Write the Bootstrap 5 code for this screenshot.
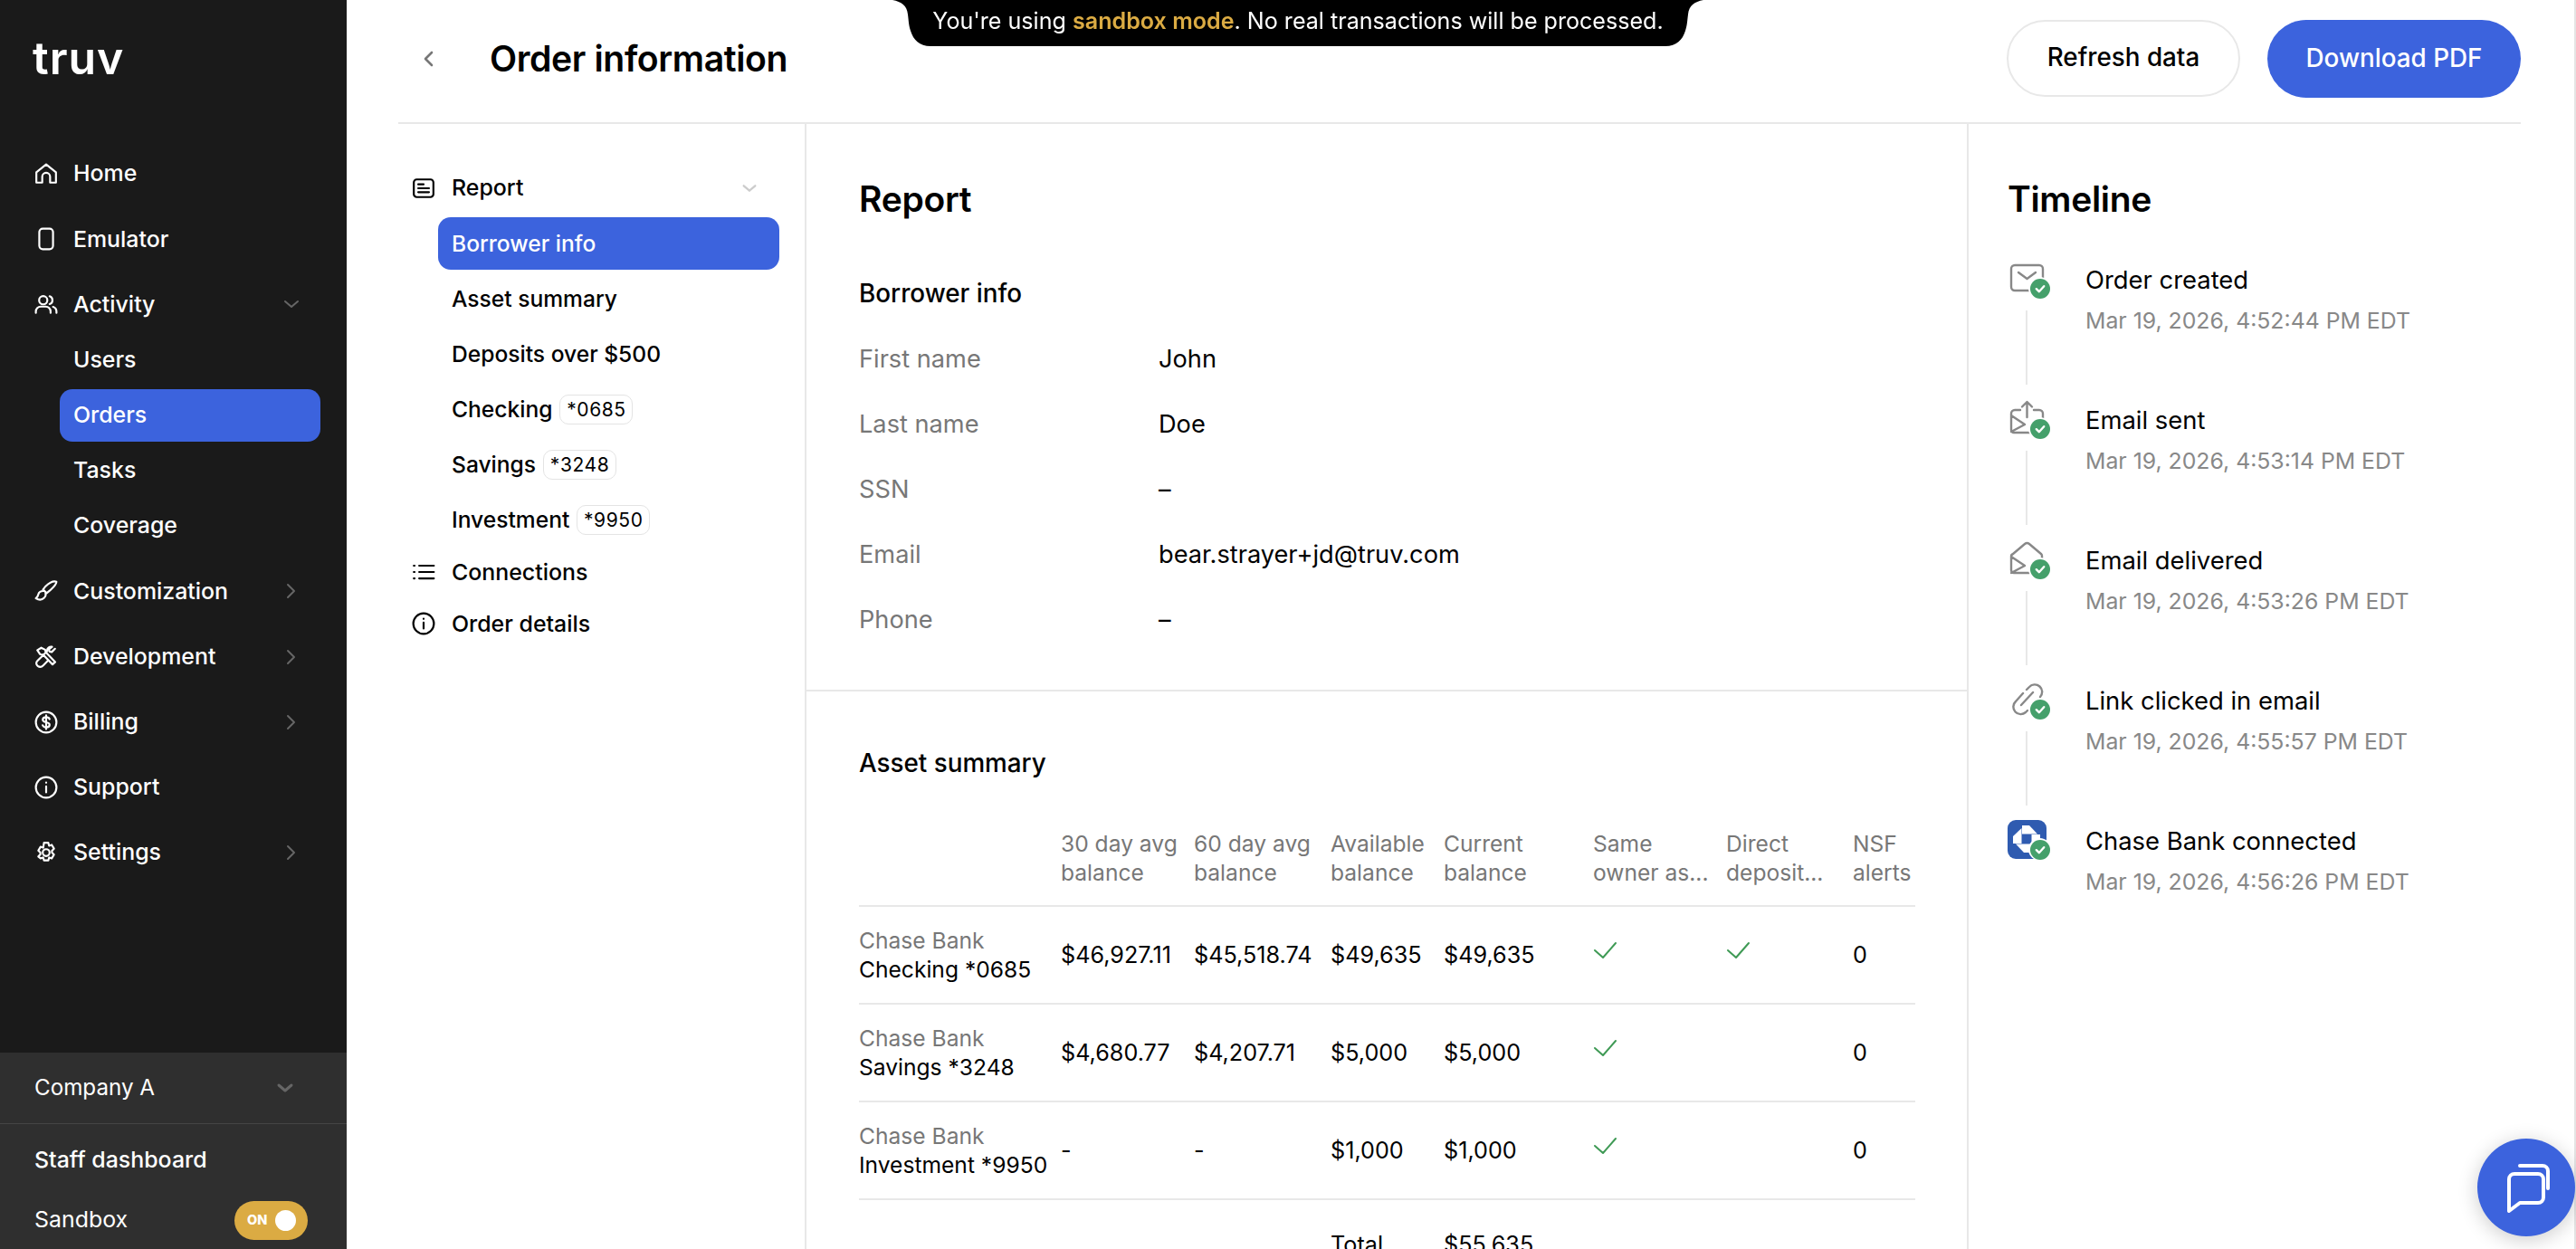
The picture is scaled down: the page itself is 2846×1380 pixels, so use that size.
<!DOCTYPE html>
<html lang="en">
<head>
    <meta charset="UTF-8">
    <meta name="viewport" content="width=device-width, initial-scale=1.0">
    <title>Order information</title>
    <link href="https://cdn.jsdelivr.net/npm/bootstrap@5.3.0/dist/css/bootstrap.min.css" rel="stylesheet">
    <style>
        html, body { height: 100%; overflow: hidden; }
        body { font-family: Inter, "Liberation Sans", sans-serif; font-size: 24.9px; color: #000; background: #fff; }
        svg.ico { fill: none; stroke: currentColor; stroke-width: 2; stroke-linecap: round; stroke-linejoin: round; flex: none; }

        /* sidebar */
        .side { width: 383px; height: 1380px; background: #1a1a1a; color: #fff; flex: none; }
        .logo { font-size: 50px; font-weight: 600; line-height: 1; letter-spacing: 1px; padding: 39px 0 0 36px; height: 163px; }
        .side-link { height: 58px; padding: 0 51px 0 38px; color: #fff; font-weight: 470; gap: 17px; margin-bottom: 14.2px; }
        .side-link svg.ico { width: 26px; height: 26px; }
        .side-link:hover, .side-link:focus { color: #fff; }
        .side-chev { margin-left: auto; color: #666; width: 20px !important; height: 20px !important; stroke-width: 3; }
        .side-sub { margin: -11px 0 14.2px; gap: 3.2px; }
        .side-sub a { height: 58px; margin: 0 29px 0 66px; padding: 0 15px; color: #fff; font-weight: 470; border-radius: 14px; }
        .side-sub a.active { background: #3c63dd; }
        .side-foot { background: #2f2f2f; height: 217px; }
        .foot-company { height: 79px; padding: 0 29px 0 38px; border-bottom: 1px solid #454545; font-size: 24.2px; }
        .foot-company svg { color: #666; width: 20px; height: 20px; stroke-width: 3; margin-right: 29px; }
        .foot-row { padding: 0 43px 0 38px; }
        .foot-staff { height: 80px; font-weight: 470; }
        .foot-sand { height: 64px; margin-top: -6px; }
        .sand-toggle { width: 81px; height: 43px; border-radius: 22px; background: #dbab43; color: #fff; font-size: 14.5px; font-weight: 800; padding: 0 13px 0 14px; }
        .sand-knob { width: 23px; height: 23px; border-radius: 50%; background: #fff; }

        /* top */
        .page { width: 2463px; height: 1380px; padding: 0 59px 0 57px; overflow: hidden; border-right: 2px solid #e5e5e5; }
        .top { height: 137px; border-bottom: 2px solid #e8e8e8; padding-bottom: 6px; }
        .back { width: 101px; color: #777; padding-left: 27px; }
        .back svg { width: 14px; height: 20px; stroke-width: 2.6; }
        .top h1 { font-size: 39.2px; font-weight: 600; margin: 0; letter-spacing: -0.4px; }
        .top-actions { gap: 30px; }
        .pill-btn { height: 85px; border-radius: 43px; font-size: 27.8px; font-weight: 470; padding: 0; display: flex; align-items: center; justify-content: center; }
        .btn-refresh { width: 258px; background: #fff; border: 2px solid #e8e8e8; color: #000; }
        .btn-pdf { width: 280px; height: 86px; background: #3c63dd; border: 0; color: #fff; }
        .banner { position: fixed; top: 0; left: 986px; width: 896px; height: 51px; color: #fff; font-size: 25.1px; text-align: center; line-height: 46px; }
        .banner svg { position: absolute; left: 0; top: 0; z-index: -1; }
        .banner b { color: #dbab43; font-weight: 600; }
        .banner span { position: relative; }

        /* sub nav */
        .body-row { height: 1243px; }
        .subnav { width: 451px; padding: 42px 28px 0 0; border-right: 2px solid #e8e8e8; flex: none; }
        .sub-head { height: 58px; padding-left: 15px; font-weight: 470; gap: 18px; color: #000; }
        .sub-head svg.ico { width: 26px; height: 26px; }
        .sub-head svg.sub-chev { margin-left: auto; margin-right: 24px; color: #ccc; width: 18px; height: 18px; stroke-width: 2.6; }
        .sub-row { height: 57px; }
        .sub-items { gap: 3.2px; padding-top: 3px; margin-left: 44px; }
        .sub-items a { height: 58px; padding: 0 15px; border-radius: 14px; color: #000; font-size: 24.6px; font-weight: 470; gap: 8px; }
        .sub-items a.active { background: #3c63dd; color: #fff; }
        .acct { border: 1px solid #e4e4e4; border-radius: 10px; height: 33px; width: 81px; font-size: 21px; font-weight: 400; display: inline-flex; align-items: center; justify-content: center; letter-spacing: .6px; }

        /* report */
        .report { width: 1282px; flex: none; padding-top: 57px; }
        .report h2, .tl h2 { font-size: 39px; font-weight: 600; margin: 0; line-height: 52px; letter-spacing: -0.3px; }
        .report h3 { font-size: 27.8px; font-weight: 500; margin: 0; line-height: 40px; padding-left: 58px; }
        .report h2 { padding-left: 58px; }
        .report h3.borrower { margin-top: 58px; }
        .info { padding-left: 58px; margin-top: 17px; }
        .info-row { height: 72px; font-size: 27.2px; }
        .info-row span:first-child { width: 331px; color: #777; }
        .report hr { margin: 41px 0 0; border-top: 2px solid #e8e8e8; opacity: 1; }
        .report h3.asset { margin-top: 59px; }
        .asset-wrap { padding: 0 58px 0 58px; margin-top: 53px; }
        .asset-table { table-layout: fixed; width: 1167px; margin: 0; }
        .asset-table th, .asset-table td { padding: 0; vertical-align: middle; border-bottom: 2px solid #e8e8e8; line-height: 32.5px; font-size: 25.2px; white-space: nowrap; overflow: visible; }
        .asset-table th { font-weight: 400; color: #777; height: 85px; vertical-align: top; font-size: 24.6px; line-height: 32px; }
        .asset-table td { height: 108px; color: #000; }
        .asset-table td:first-child { font-size: 24.6px; }
        .asset-table tr.tot td { border: 0; vertical-align: top; padding-top: 33px; }
        .col-a { width: 223px; } .col-b { width: 147px; } .col-c { width: 151px; } .col-d { width: 125px; }
        .col-e { width: 165px; } .col-f { width: 147px; } .col-g { width: 140px; } .col-h { width: 69px; }
        .muted-txt { color: #777; }
        .yes { width: 28px; height: 24px; color: #3f9a55; stroke-width: 2.2; margin-top: -8px; display: block; }

        /* timeline */
        .tl { flex: 1; padding: 57px 0 0 43px; border-left: 2px solid #e8e8e8; }
        .tl-list { margin-top: 40px; }
        .tl-item { height: 155px; gap: 43px; }
        .tl-mark { width: 43px; flex: none; }
        .tl-box { position: relative; width: 43px; height: 43px; color: #888; }
        .tl-box svg.ico { width: 43px; height: 43px; stroke-width: 2.4; }
        .tl-check { position: absolute; left: 23px; top: 20px; width: 25px; height: 25px; background: #fff; border-radius: 50%; padding: 1.5px; }
        .tl-check svg { display: block; width: 22px; height: 22px; }
        .tl-line { width: 2px; height: 82px; background: #e8e8e8; margin: 14px 0 0 20px; }
        .tl-title { font-size: 27.4px; line-height: 36px; margin-top: 5px; }
        .tl-date { font-size: 24.8px; color: #888; margin-top: 11px; line-height: 32px; }

        .chat { position: fixed; left: 2737px; top: 1258px; width: 108px; height: 108px; border-radius: 50%; background: #3c63dd; box-shadow: 0 4px 22px rgba(0,0,0,.2); border: 0; padding: 0; }
        .chat svg { display: block; }
    </style>
</head>
<body class="d-flex">
    <svg width="0" height="0" class="position-absolute">
        <symbol id="i-chev-d" viewBox="0 0 20 20"><path d="M3 7l7 6 7-6"/></symbol>
        <symbol id="i-chev-r" viewBox="0 0 20 20"><path d="M6 3l7 7-7 7"/></symbol>
        <symbol id="i-info" viewBox="0 0 24 24"><circle cx="12" cy="12" r="10.5"/><path d="M12 11v6M12 7v.2"/></symbol>
        <symbol id="i-check" viewBox="0 0 22 22"><circle cx="11" cy="11" r="11" fill="#45a06b" stroke="none"/><path d="M6.8 11.2l3 3 5.4-6" stroke="#fff" stroke-width="2.4" fill="none" stroke-linecap="round" stroke-linejoin="round"/></symbol>
    </svg>

    <aside class="side d-flex flex-column">
        <div class="logo">truv</div>
        <nav class="nav flex-column flex-grow-1 flex-nowrap">
            <a class="nav-link side-link d-flex align-items-center" href="#">
                <svg class="ico" viewBox="0 0 24 24"><path d="M2 21V10.500L12 2.500l10 8V21h-6v-6a4 4 0 0 0-8 0v6z"/></svg>Home</a>
            <a class="nav-link side-link d-flex align-items-center" href="#">
                <svg class="ico" viewBox="0 0 24 24"><rect x="5" y="1.500" width="14" height="21" rx="3.500"/></svg>Emulator</a>
            <a class="nav-link side-link d-flex align-items-center" href="#">
                <svg class="ico" viewBox="0 0 24 24"><circle cx="9" cy="8" r="4.200"/><path d="M1.500 21v-1.500a5 5 0 0 1 5-5h5a5 5 0 0 1 5 5V21M15.500 4a4.200 4.200 0 0 1 0 8M19 14.800a5 5 0 0 1 3.500 4.700V21"/></svg>Activity
                <svg class="ico side-chev"><use href="#i-chev-d"/></svg></a>
            <div class="side-sub d-flex flex-column">
                <a class="d-flex align-items-center text-decoration-none" href="#">Users</a>
                <a class="d-flex align-items-center text-decoration-none active" href="#">Orders</a>
                <a class="d-flex align-items-center text-decoration-none" href="#">Tasks</a>
                <a class="d-flex align-items-center text-decoration-none" href="#">Coverage</a>
            </div>
            <a class="nav-link side-link d-flex align-items-center" href="#">
                <svg class="ico" viewBox="0 0 24 24"><path d="M22.500 2.500c-3-1-7 .8-11 4.600L8.800 10.500l3.700 3.700 3.300-2.700c4-3.800 6.700-6 6.700-9zM9 12c-3 0-4.500 1.200-5 3.500-.3 1.600-1 2.800-2.500 4 3 1.800 6.500 1.500 8.500-.5 1.400-1.400 1.800-3 1.300-4.300"/></svg>Customization
                <svg class="ico side-chev"><use href="#i-chev-r"/></svg></a>
            <a class="nav-link side-link d-flex align-items-center" href="#">
                <svg class="ico" viewBox="0 0 24 24"><path d="M7 2.500L3 5l2.800 4.200 3 .3 9.700 10 2.700-2.500-9.700-10-.5-2.500zM21 3.500l-3.300 3.300-2.400-.4-.4-2.400L18 1.500c-2.500-.6-5.500 1.400-5 4.500L3 16c-2 2-.8 6 3 6 1 0 2-.5 3-1.500l4.500-4.500"/></svg>Development
                <svg class="ico side-chev"><use href="#i-chev-r"/></svg></a>
            <a class="nav-link side-link d-flex align-items-center" href="#">
                <svg class="ico" viewBox="0 0 24 24"><circle cx="12" cy="12" r="10.500"/><path d="M15.500 8.800c-.5-1.300-1.800-2-3.500-2-2 0-3.500 1-3.500 2.600 0 3.500 7 1.700 7 5.200 0 1.600-1.500 2.600-3.500 2.600-1.800 0-3.100-.8-3.600-2.200M12 5v14"/></svg>Billing
                <svg class="ico side-chev"><use href="#i-chev-r"/></svg></a>
            <a class="nav-link side-link d-flex align-items-center" href="#">
                <svg class="ico"><use href="#i-info"/></svg>Support</a>
            <a class="nav-link side-link d-flex align-items-center" href="#">
                <svg class="ico" viewBox="0 0 24 24"><circle cx="12" cy="12" r="3.500"/><path d="M9.800 2h4.400l.8 3 2.700-.9 2.300 3.900-2.100 2.100a7 7 0 0 1 0 1.800l2.100 2.100-2.300 3.900-2.700-.9-.8 3H9.800l-.8-3-2.700.9L4 16l2.100-2.100a7 7 0 0 1 0-1.800L4 10l2.300-3.900 2.700.9z"/></svg>Settings
                <svg class="ico side-chev"><use href="#i-chev-r"/></svg></a>
        </nav>
        <div class="side-foot">
            <div class="foot-company d-flex align-items-center justify-content-between">Company A
                <svg class="ico"><use href="#i-chev-d"/></svg></div>
            <div class="foot-row foot-staff d-flex align-items-center">Staff dashboard</div>
            <div class="foot-row foot-sand d-flex align-items-center justify-content-between">Sandbox
                <div class="sand-toggle d-flex align-items-center justify-content-between"><span>ON</span><span class="sand-knob"></span></div></div>
        </div>
    </aside>

    <main class="page">
        <header class="top d-flex align-items-center">
            <a class="back d-flex align-items-center" href="#"><svg class="ico" viewBox="0 0 14 20"><path d="M10 3L3 10l7 7"/></svg></a>
            <h1>Order information</h1>
            <div class="ms-auto d-flex top-actions">
                <button class="btn pill-btn btn-refresh">Refresh data</button>
                <button class="btn pill-btn btn-pdf">Download PDF</button>
            </div>
        </header>

        <div class="body-row d-flex">
            <div class="subnav">
                <a class="sub-head d-flex align-items-center text-decoration-none" href="#">
                    <svg class="ico" viewBox="0 0 24 24"><rect x="2" y="3" width="20" height="18" rx="3"/><path d="M6.500 8H12M6.500 12h11M6.500 16h11"/></svg>Report
                    <svg class="ico sub-chev"><use href="#i-chev-d"/></svg></a>
                <div class="sub-items d-flex flex-column">
                    <a class="d-flex align-items-center text-decoration-none active" href="#">Borrower info</a>
                    <a class="d-flex align-items-center text-decoration-none" href="#">Asset summary</a>
                    <a class="d-flex align-items-center text-decoration-none" href="#">Deposits over $500</a>
                    <a class="d-flex align-items-center text-decoration-none" href="#">Checking <span class="acct">*0685</span></a>
                    <a class="d-flex align-items-center text-decoration-none" href="#">Savings <span class="acct">*3248</span></a>
                    <a class="d-flex align-items-center text-decoration-none" href="#">Investment <span class="acct">*9950</span></a>
                </div>
                <a class="sub-head sub-row d-flex align-items-center text-decoration-none" href="#">
                    <svg class="ico" viewBox="0 0 24 24"><path d="M7.500 5.500h15M7.500 12h15M7.500 18.500h15M2 5.500h.8M2 12h.8M2 18.500h.8"/></svg>Connections</a>
                <a class="sub-head sub-row d-flex align-items-center text-decoration-none" href="#">
                    <svg class="ico"><use href="#i-info"/></svg>Order details</a>
            </div>

            <section class="report">
                <h2>Report</h2>
                <h3 class="borrower">Borrower info</h3>
                <div class="info">
                    <div class="info-row d-flex align-items-center"><span>First name</span><span>John</span></div>
                    <div class="info-row d-flex align-items-center"><span>Last name</span><span>Doe</span></div>
                    <div class="info-row d-flex align-items-center"><span>SSN</span><span>–</span></div>
                    <div class="info-row d-flex align-items-center"><span>Email</span><span>bear.strayer+jd@truv.com</span></div>
                    <div class="info-row d-flex align-items-center"><span>Phone</span><span>–</span></div>
                </div>
                <hr>
                <h3 class="asset">Asset summary</h3>
                <div class="asset-wrap">
                    <table class="table asset-table">
                        <colgroup><col class="col-a"><col class="col-b"><col class="col-c"><col class="col-d"><col class="col-e"><col class="col-f"><col class="col-g"><col class="col-h"></colgroup>
                        <thead>
                            <tr><th></th><th>30 day avg<br>balance</th><th>60 day avg<br>balance</th><th>Available<br>balance</th><th>Current<br>balance</th><th>Same<br>owner as...</th><th>Direct<br>deposit...</th><th>NSF<br>alerts</th></tr>
                        </thead>
                        <tbody>
                            <tr><td><span class="muted-txt">Chase Bank</span><br>Checking *0685</td><td>$46,927.11</td><td>$45,518.74</td><td>$49,635</td><td>$49,635</td><td><svg class="ico yes" viewBox="0 0 28 24"><path d="M2 11l9 8L25 3"/></svg></td><td><svg class="ico yes" viewBox="0 0 28 24"><path d="M2 11l9 8L25 3"/></svg></td><td>0</td></tr>
                            <tr><td><span class="muted-txt">Chase Bank</span><br>Savings *3248</td><td>$4,680.77</td><td>$4,207.71</td><td>$5,000</td><td>$5,000</td><td><svg class="ico yes" viewBox="0 0 28 24"><path d="M2 11l9 8L25 3"/></svg></td><td></td><td>0</td></tr>
                            <tr><td><span class="muted-txt">Chase Bank</span><br>Investment *9950</td><td>-</td><td>-</td><td>$1,000</td><td>$1,000</td><td><svg class="ico yes" viewBox="0 0 28 24"><path d="M2 11l9 8L25 3"/></svg></td><td></td><td>0</td></tr>
                            <tr class="tot"><td></td><td></td><td></td><td class="muted-txt">Total</td><td>$55,635</td><td></td><td></td><td></td></tr>
                        </tbody>
                    </table>
                </div>
            </section>

            <aside class="tl">
                <h2>Timeline</h2>
                <div class="tl-list">
                    <div class="tl-item d-flex">
                        <div class="tl-mark"><div class="tl-box"><svg class="ico" viewBox="0 0 43 43"><rect x="4" y="7" width="35" height="28" rx="4"/><path d="M12 15l9.500 7 9.500-7"/></svg><span class="tl-check"><svg><use href="#i-check"/></svg></span></div><div class="tl-line"></div></div>
                        <div><div class="tl-title">Order created</div><div class="tl-date">Mar 19, 2026, 4:52:44 PM EDT</div></div>
                    </div>
                    <div class="tl-item d-flex">
                        <div class="tl-mark"><div class="tl-box"><svg class="ico" viewBox="0 0 43 43"><path d="M21.500 20V3.500M16 8.500l5.500-5.500 5.500 5.500M14 12H8a4 4 0 0 0-4 4v18a3 3 0 0 0 3 3h18M29 12h6a4 4 0 0 1 4 4v8M4 18l15 10-15 8"/></svg><span class="tl-check"><svg><use href="#i-check"/></svg></span></div><div class="tl-line"></div></div>
                        <div><div class="tl-title">Email sent</div><div class="tl-date">Mar 19, 2026, 4:53:14 PM EDT</div></div>
                    </div>
                    <div class="tl-item d-flex">
                        <div class="tl-mark"><div class="tl-box"><svg class="ico" viewBox="0 0 43 43"><path d="M38 24v-6a3 3 0 0 0-1-2L24 5a4 4 0 0 0-5 0L6 16a3 3 0 0 0-2 3v15a3 3 0 0 0 3 3h17M4 19l15 10-15 8"/></svg><span class="tl-check"><svg><use href="#i-check"/></svg></span></div><div class="tl-line"></div></div>
                        <div><div class="tl-title">Email delivered</div><div class="tl-date">Mar 19, 2026, 4:53:26 PM EDT</div></div>
                    </div>
                    <div class="tl-item d-flex">
                        <div class="tl-mark"><div class="tl-box"><svg class="ico" viewBox="0 0 43 43"><path d="M21 11l3-3a8 8 0 0 1 12 11M17 15l-8 9a8 8 0 0 0 11 12l2-2M15 28l13-14"/></svg><span class="tl-check"><svg><use href="#i-check"/></svg></span></div><div class="tl-line"></div></div>
                        <div><div class="tl-title">Link clicked in email</div><div class="tl-date">Mar 19, 2026, 4:55:57 PM EDT</div></div>
                    </div>
                    <div class="tl-item d-flex">
                        <div class="tl-mark"><div class="tl-box"><svg viewBox="0 0 43 43" width="43" height="43"><rect width="43" height="43" rx="9" fill="#2f5bb0"/><g fill="#fff" transform="translate(21 21)"><polygon points="-5,-15 3,-15 12,-5.500 -5,-5.500"/><polygon points="-5,-15 3,-15 12,-5.500 -5,-5.500" transform="rotate(90)"/><polygon points="-5,-15 3,-15 12,-5.500 -5,-5.500" transform="rotate(180)"/><polygon points="-5,-15 3,-15 12,-5.500 -5,-5.500" transform="rotate(270)"/></g></svg><span class="tl-check"><svg><use href="#i-check"/></svg></span></div></div>
                        <div><div class="tl-title">Chase Bank connected</div><div class="tl-date">Mar 19, 2026, 4:56:26 PM EDT</div></div>
                    </div>
                </div>
            </aside>
        </div>
    </main>

    <div class="banner"><svg width="896" height="51" viewBox="0 0 896 51"><path d="M0 0h896c-10 2-16 6-17 16-1 8-1 12-3 18-3 10-10 17-22 17H42c-12 0-19-7-22-17-2-6-2-10-3-18C16 6 10 2 0 0z" fill="#000"/></svg><span>You're using <b>sandbox mode</b>. No real transactions will be processed.</span></div>

    <button class="chat" aria-label="Chat"><svg width="108" height="108" viewBox="0 0 108 108" fill="none" stroke="#fff" stroke-width="4" stroke-linecap="round" stroke-linejoin="round"><path d="M35 45a6 6 0 0 1 6-6h26a6 6 0 0 1 6 6v20a6 6 0 0 1-6 6H47l-12 9z"/><path d="M47 30h25a6 6 0 0 1 6 6v19"/></svg></button>

    <script src="https://cdn.jsdelivr.net/npm/bootstrap@5.3.0/dist/js/bootstrap.bundle.min.js"></script>
</body>
</html>
